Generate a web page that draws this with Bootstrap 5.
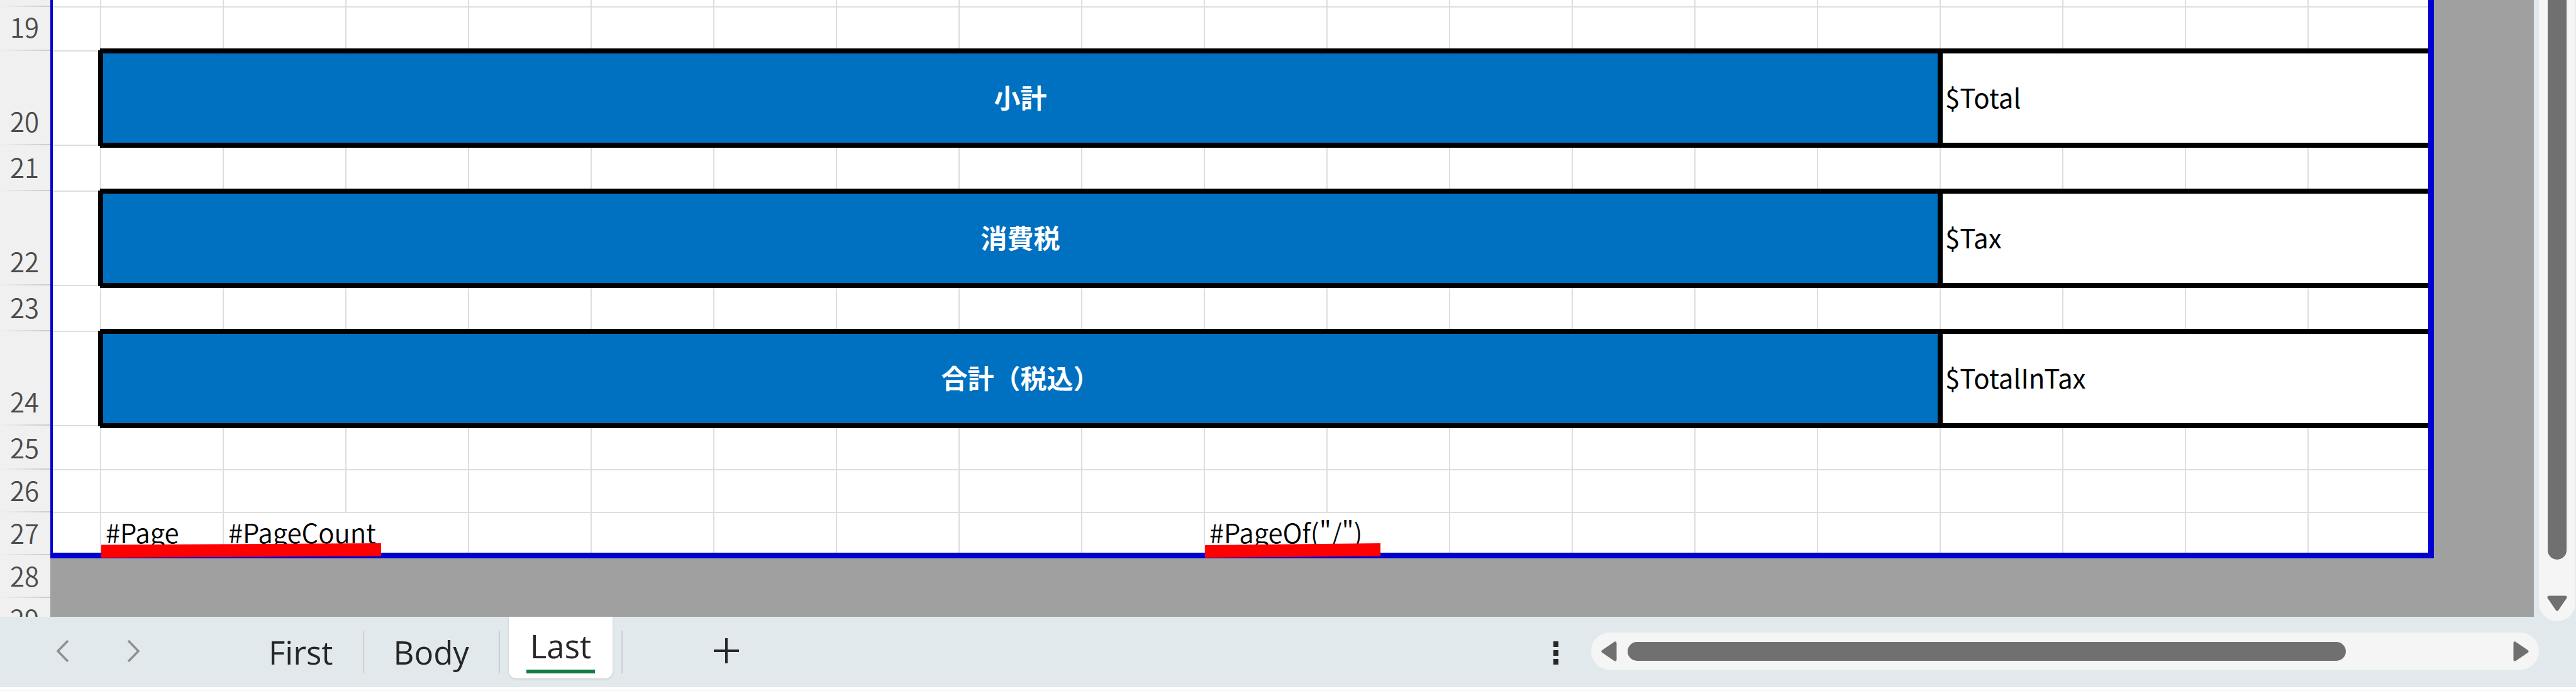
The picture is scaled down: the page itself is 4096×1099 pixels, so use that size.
<!DOCTYPE html>
<html lang="ja">
<head>
<meta charset="utf-8">
<meta name="viewport" content="width=device-width, initial-scale=1">
<title>Last</title>
<link href="https://cdn.jsdelivr.net/npm/bootstrap@5.3.0/dist/css/bootstrap.min.css" rel="stylesheet">
<style>
:root { --bar: #e1e9ec; --line: #dedede; --area: #0000d0; --thumb: #707070; --track: #f5f5f5; }
body { font-family: "Noto Sans CJK JP", "Noto Sans", sans-serif; background: var(--track); }
.book { background: var(--bar); border-bottom: 4px solid #fff; margin-bottom: 2px; }
.pane { background: #a0a0a0; margin-right: 8px; }
.side { width: 59px; flex: none; }

.cells { table-layout: fixed; border-collapse: collapse; width: 3869px; font-size: 42px; line-height: 48px; color: #000; }
.cells .w-head { width: 82px; }
.cells .w-first { width: 78px; }
.cells .w-unit { width: 195px; }
.cells td { border: 2px solid var(--line); background: #fff; padding: 0; position: relative; white-space: nowrap; }
.cells th { padding: 0 0 15px 16px; vertical-align: bottom; font-weight: 350; color: #4c4c4c;
  background: linear-gradient(90deg, transparent, #cacaca) left bottom / 100% 2px no-repeat, #f0f0f0; }
.cells .low th { padding-bottom: 12px; }
.cells .r-top th { padding: 0; }
.cells .r-top td { border-top: 0; }
.cells td.edge-l { border-left: 4px solid var(--area); }
.cells td.edge-r { border-right: 9px solid var(--area); }
.cells .end td { border-bottom: 9px solid var(--area); font-weight: 350; vertical-align: bottom; padding: 0 0 9px 7px; }
.cells .outside td { border: 0; border-left: 4px solid #a0a0a0; background: transparent; }
.cells td.caption-cell { border: 8px solid #000; background: #0070c0; color: #fff; font-weight: 700; text-align: center; padding-bottom: 4px; }
.cells td.value-cell { border-top: 8px solid #000; border-bottom: 8px solid #000; padding: 0 0 4px 4px; }
.r-top { height: 11px; }
.r-gap { height: 73px; }
.r-19, .r-25 { height: 70px; }
.r-tall { height: 150px; }
.r-row { height: 68px; }
.marker { position: absolute; left: 0; bottom: -8px; z-index: 1; }

.tabs { height: 112px; font-family: "Open Sans", "Noto Sans", sans-serif; }
.tabs button { border: 0; background: none; padding: 0; color: #262626; font-size: 51px; line-height: 68px; }
.tabs .steps { padding: 20px 110px 0 42px; }
.tabs .step { width: 114px; height: 68px; }
.tabs .sheet-tab { padding: 0 47px; border-right: 2px solid #cfcfcf; margin-top: 22px; height: 68px; }
.tabs .current { width: 195px; padding: 0 14px; border-right: 2px solid #cfcfcf; margin-top: 22px; height: 68px; }
.tabs .current button { width: 165px; height: 98px; margin-top: -22px; background: #fff; border-radius: 0 0 12px 12px; box-shadow: 0 1px 3px #c4c4c4; }
.tabs .current span { display: block; width: 109px; margin: 0 auto; border-bottom: 6px solid #107c41; line-height: 76px; }
.tabs .add-tab { padding: 33px 0 0 145px; }
.tabs .more { margin: 38px 52px 0 0; }
.hbar { width: 1507px; height: 59px; border-radius: 29px; background: var(--track); margin-top: 25px; padding: 0 16px; }
.hbar .thumb { width: 1142px; height: 30px; border-radius: 15px; background: var(--thumb); margin-left: 17px; }
.vbar { width: 58px; height: 988px; border-radius: 0 0 29px 29px; background: var(--track); padding-bottom: 16px; }
.vbar .thumb { width: 30px; border-radius: 0 0 15px 15px; background: var(--thumb); margin-bottom: 57px; }
.arrow { border: 0; background: none; padding: 0; line-height: 0; }
svg { display: block; }
</style>
</head>
<body class="vh-100 overflow-hidden d-flex flex-column">
<main class="book d-flex flex-grow-1 overflow-hidden">
  <div class="d-flex flex-column flex-grow-1 overflow-hidden">
    <div class="pane flex-grow-1 overflow-hidden">
      <table class="cells">
        <colgroup><col class="w-head"><col class="w-first"><col class="w-unit" span="19"></colgroup>
        <tbody>
          <tr class="r-top"><th></th><td class="edge-l"></td><td></td><td></td><td></td><td></td><td></td><td></td><td></td><td></td><td></td><td></td><td></td><td></td><td></td><td></td><td></td><td></td><td></td><td></td><td class="edge-r"></td></tr>
          <tr class="r-19"><th scope="row">19</th><td class="edge-l"></td><td></td><td></td><td></td><td></td><td></td><td></td><td></td><td></td><td></td><td></td><td></td><td></td><td></td><td></td><td></td><td></td><td></td><td></td><td class="edge-r"></td></tr>
          <tr class="r-tall"><th scope="row">20</th><td class="edge-l"></td><td class="caption-cell" colspan="15">小計</td><td class="value-cell edge-r" colspan="4">$Total</td></tr>
          <tr class="r-gap"><th scope="row">21</th><td class="edge-l"></td><td></td><td></td><td></td><td></td><td></td><td></td><td></td><td></td><td></td><td></td><td></td><td></td><td></td><td></td><td></td><td></td><td></td><td></td><td class="edge-r"></td></tr>
          <tr class="r-tall"><th scope="row">22</th><td class="edge-l"></td><td class="caption-cell" colspan="15">消費税</td><td class="value-cell edge-r" colspan="4">$Tax</td></tr>
          <tr class="r-gap"><th scope="row">23</th><td class="edge-l"></td><td></td><td></td><td></td><td></td><td></td><td></td><td></td><td></td><td></td><td></td><td></td><td></td><td></td><td></td><td></td><td></td><td></td><td></td><td class="edge-r"></td></tr>
          <tr class="r-tall"><th scope="row">24</th><td class="edge-l"></td><td class="caption-cell" colspan="15">合計（税込）</td><td class="value-cell edge-r" colspan="4">$TotalInTax</td></tr>
          <tr class="r-25 low"><th scope="row">25</th><td class="edge-l"></td><td></td><td></td><td></td><td></td><td></td><td></td><td></td><td></td><td></td><td></td><td></td><td></td><td></td><td></td><td></td><td></td><td></td><td></td><td class="edge-r"></td></tr>
          <tr class="r-row low"><th scope="row">26</th><td class="edge-l"></td><td></td><td></td><td></td><td></td><td></td><td></td><td></td><td></td><td></td><td></td><td></td><td></td><td></td><td></td><td></td><td></td><td></td><td></td><td class="edge-r"></td></tr>
          <tr class="r-row low end"><th scope="row">27</th><td class="edge-l"></td>
            <td>#Page<svg class="marker" width="445" height="23" aria-hidden="true"><path d="M0 2.600L445 0V20.500L0 23Z" fill="#f00"/></svg></td>
            <td colspan="2">#PageCount</td><td></td><td></td><td></td><td></td><td></td><td></td>
            <td colspan="2">#PageOf("/")<svg class="marker" width="279" height="23" aria-hidden="true"><path d="M0 3L279 0V20.500L0 23Z" fill="#f00"/></svg></td>
            <td></td><td></td><td></td><td></td><td></td><td></td><td></td><td class="edge-r"></td></tr>
          <tr class="r-row low outside"><th scope="row">28</th><td colspan="20"></td></tr>
          <tr class="r-row low outside"><th scope="row">29</th><td colspan="20"></td></tr>
        </tbody>
      </table>
    </div>
    <div class="tabs d-flex flex-shrink-0 align-items-start">
      <div class="steps d-flex">
        <button class="step" aria-label="前のシート"><svg width="114" height="68" fill="none" stroke="#8f8f8f" stroke-width="3.500"><path d="M66 18L50 34.500L66 51"/></svg></button>
        <button class="step" aria-label="次のシート"><svg width="114" height="68" fill="none" stroke="#8f8f8f" stroke-width="3.500"><path d="M48 18L64 34.500L48 51"/></svg></button>
      </div>
      <button class="sheet-tab">First</button>
      <button class="sheet-tab">Body</button>
      <div class="current"><button aria-current="page"><span>Last</span></button></div>
      <button class="add-tab" aria-label="新しいシート"><svg width="40" height="42" stroke="#262626" stroke-width="4" fill="none"><path d="M0 21H40M20 1V41"/></svg></button>
      <button class="more ms-auto" aria-label="その他"><svg width="8" height="40" fill="#262626"><path d="M0 1H8V10H0ZM0 15H8V24H0ZM0 29H8V38H0Z"/></svg></button>
      <div class="hbar d-flex align-items-center">
        <button class="arrow" aria-label="左へ"><svg width="25" height="32"><path d="M22 3V29L3 16Z" fill="#707070" stroke="#707070" stroke-width="5" stroke-linejoin="round"/></svg></button>
        <div class="thumb"></div>
        <button class="arrow ms-auto" aria-label="右へ"><svg width="25" height="32"><path d="M3 3V29L22 16Z" fill="#707070" stroke="#707070" stroke-width="5" stroke-linejoin="round"/></svg></button>
      </div>
    </div>
  </div>
  <div class="side">
    <div class="vbar d-flex flex-column align-items-center">
      <div class="thumb flex-grow-1"></div>
      <button class="arrow" aria-label="下へ"><svg width="32" height="25"><path d="M3 3H29L16 22Z" fill="#707070" stroke="#707070" stroke-width="5" stroke-linejoin="round"/></svg></button>
    </div>
  </div>
</main>
<script src="https://cdn.jsdelivr.net/npm/bootstrap@5.3.0/dist/js/bootstrap.bundle.min.js"></script>
</body>
</html>
